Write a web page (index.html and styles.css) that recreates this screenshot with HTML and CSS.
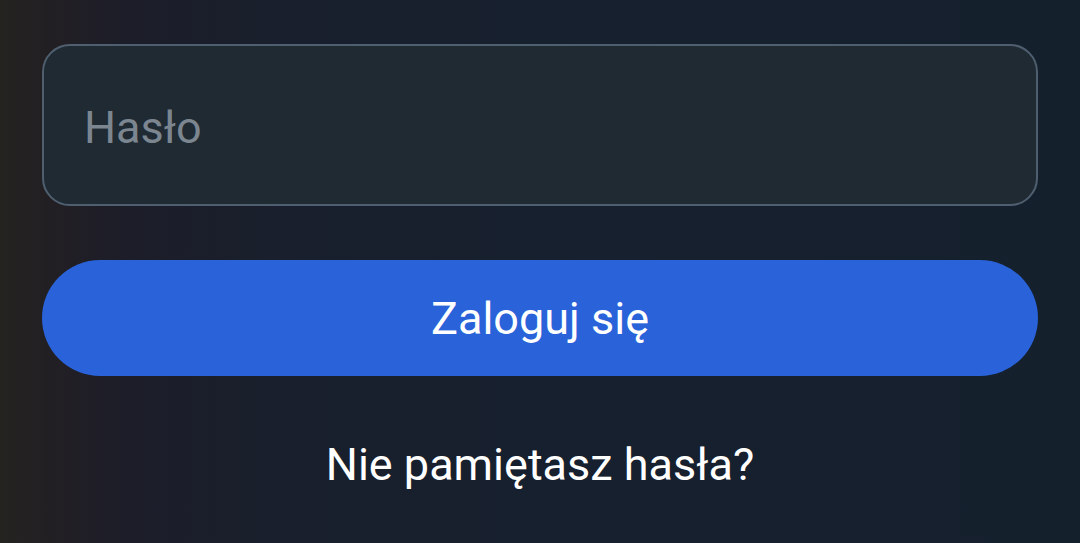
FILE: index.html
```html
<!DOCTYPE html>
<html lang="pl">
<head>
<meta charset="utf-8">
<title>Logowanie</title>
<link rel="stylesheet" href="styles.css">
</head>
<body>
<main class="form">
  <input class="field" type="password" placeholder="Hasło">
  <button class="submit" type="button">Zaloguj się</button>
  <a class="forgot" href="#">Nie pamiętasz hasła?</a>
</main>
</body>
</html>
```
FILE: styles.css
```css
html, body {
  margin: 0;
  height: 100%;
}
body {
  background: linear-gradient(to right, #242320 0%, #221f24 5%, #1c1d29 12%, #191f2c 25%, #16202e 55%, #15202d 100%);
  font-family: Roboto, "Liberation Sans", sans-serif;
  overflow: hidden;
}
.form {
  display: flex;
  flex-direction: column;
  padding: 44px 42px 0 42px;
}
.field {
  box-sizing: border-box;
  height: 162px;
  width: 100%;
  margin: 0;
  border: 2px solid #4f5f6f;
  border-radius: 28px;
  background: #1f2a33;
  padding: 4px 40px 0 40px;
  font-family: Roboto, "Liberation Sans", sans-serif;
  font-size: 45px;
  color: #ffffff;
  outline: none;
}
.field::placeholder {
  color: #7b8690;
  opacity: 1;
}
.submit {
  margin: 54px 0 0 0;
  height: 116px;
  width: 100%;
  border: none;
  border-radius: 58px;
  background: #2962d9;
  color: #ffffff;
  font-family: Roboto, "Liberation Sans", sans-serif;
  font-size: 45px;
  padding: 0;
  cursor: pointer;
}
.forgot {
  margin-top: 62px;
  align-self: center;
  color: #ffffff;
  text-decoration: none;
  font-size: 45px;
  line-height: normal;
}
```
